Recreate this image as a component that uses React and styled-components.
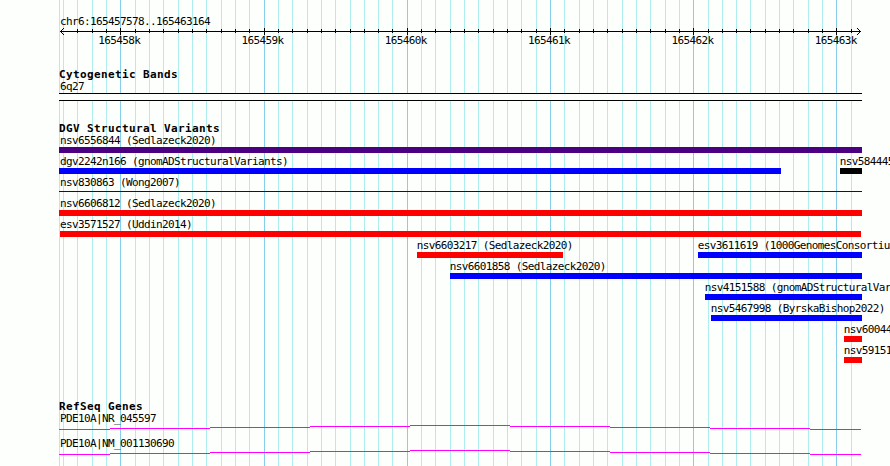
import React from 'react';
import styled, { createGlobalStyle } from 'styled-components';

const GlobalStyle = createGlobalStyle`
  body { margin: 0; background: #fdfffc; }
`;

const LEFT = 59;
const RIGHT = 862;

const Browser = styled.main`
  position: relative;
  width: 890px;
  height: 466px;
  overflow: hidden;
  background: #fdfffc;
  color: #000;
  font-family: 'DejaVu Sans Mono', 'Liberation Mono', monospace;
`;

const GridLines = styled.svg`
  position: absolute;
  inset: 0;
  display: block;
`;

const Content = styled.div`
  position: relative;
  display: flex;
  flex-direction: column;
`;

const Label = styled.span`
  display: block;
  height: 12px;
  font-size: 11px;
  line-height: 12px;
  letter-spacing: -0.622px;
  white-space: pre;
`;

const Ruler = styled.header`
  height: 68px;
  padding-top: 16px;
  box-sizing: border-box;
`;

const Region = styled(Label)`
  margin-left: 60px;
`;

const Axis = styled.svg`
  display: block;
  height: 7px;
`;

const TickRow = styled.div`
  display: flex;
  gap: 101.3px;
  padding-left: 98.2px;
`;

const TickLabel = styled(Label)`
  width: 42px;
  flex: none;
`;

const Track = styled.section`
  height: ${(p) => p.$height}px;
`;

const Title = styled.h2`
  margin: 0 0 0 59px;
  height: 13px;
  font-size: 11px;
  line-height: 13px;
  font-weight: 700;
  letter-spacing: 0.378px;
  white-space: pre;
`;

const Band = styled.div`
  margin: 0 0 0 ${LEFT}px;
  width: ${RIGHT - LEFT}px;
  height: 8px;
  box-sizing: border-box;
  border: solid #000;
  border-width: 1px 0;
  background: #fdfffc;
`;

const Row = styled.div`
  display: grid;
  height: 21px;
`;

const Feature = styled.div`
  grid-area: 1 / 1;
  margin-left: ${(p) => p.$start}px;
`;

const FeatureLabel = styled(Label)`
  margin-left: ${(p) => (p.$edge ? 60 : -0.3)}px;
`;

const Bar = styled.div`
  width: ${(p) => p.$width}px;
  height: ${(p) => (p.$thin ? 1 : 6)}px;
  margin-top: ${(p) => (p.$thin ? 2 : 0)}px;
  margin-left: ${(p) => p.$offset}px;
  background: ${(p) => p.$color};
`;

const Gene = styled.div`
  height: 25px;
`;

const Intron = styled.svg`
  display: block;
  height: 5px;
`;

const lines = Array.from({ length: 56 }, (_, i) => ({
  x: Math.round(63.12 + i * 14.32),
  major: i % 10 === 4,
}));

const ticks = ['165458k', '165459k', '165460k', '165461k', '165462k', '165463k'];

const rows = [
  [{ name: 'nsv6556844 (Sedlazeck2020)', from: 59, to: 862, color: '#4b0082' }],
  [
    { name: 'dgv2242n166 (gnomADStructuralVariants)', from: 59, to: 781, color: '#0000ff' },
    { name: 'nsv584445', from: 840, to: 862, color: '#000' },
  ],
  [{ name: 'nsv830863 (Wong2007)', from: 59, to: 862, color: '#0000cd', thin: true }],
  [{ name: 'nsv6606812 (Sedlazeck2020)', from: 59, to: 862, color: '#ff0000' }],
  [{ name: 'esv3571527 (Uddin2014)', from: 60, to: 861, color: '#ff0000' }],
  [
    { name: 'nsv6603217 (Sedlazeck2020)', from: 417, to: 563, color: '#ff0000' },
    { name: 'esv3611619 (1000GenomesConsortium)', from: 698, to: 862, color: '#0000ff' },
  ],
  [{ name: 'nsv6601858 (Sedlazeck2020)', from: 450, to: 862, color: '#0000ff' }],
  [{ name: 'nsv4151588 (gnomADStructuralVariants)', from: 705, to: 862, color: '#0000ff' }],
  [{ name: 'nsv5467998 (ByrskaBishop2022)', from: 711, to: 862, color: '#0000ff' }],
  [{ name: 'nsv60044', from: 844, to: 862, color: '#ff0000' }],
  [{ name: 'nsv59151', from: 844, to: 862, color: '#ff0000' }],
];

const intronPath =
  'M59 4.5H110M110 3.5H210M210 2.5H310M310 1.5H410M410 0.5H510M510 1.5H610M610 2.5H710M710 3.5H810M810 4.5H861';

function FeatureGlyph({ feature }) {
  const edge = feature.from <= 60;
  return (
    <Feature $start={edge ? 0 : feature.from}>
      <FeatureLabel $edge={edge}>{feature.name}</FeatureLabel>
      <Bar
        $offset={edge ? feature.from : 0}
        $width={feature.to - feature.from}
        $color={feature.color}
        $thin={feature.thin}
      />
    </Feature>
  );
}

export default function App() {
  return (
    <>
      <GlobalStyle />
      <Browser>
        <GridLines width="890" height="466" shapeRendering="crispEdges">
          <rect x="59" y="0" width="1" height="466" fill="#afeeee" />
          {lines.map((l) => (
            <rect key={l.x} x={l.x} y="0" width="1" height="466" fill={l.major ? '#87ceeb' : '#afeeee'} />
          ))}
        </GridLines>
        <Content>
          <Ruler>
            <Region>chr6:165457578..165463164</Region>
            <Axis width="890" height="7" viewBox="0 28 890 7" shapeRendering="crispEdges">
              <rect x="60" y="31" width="801" height="1" />
              {lines.slice(1).map((l) => (
                <rect key={l.x} x={l.x} y={l.major ? 28 : 29} width="1" height={l.major ? 7 : 4} />
              ))}
              <path d="M61 30h1v1h-1zM62 29h1v1h-1zM63 28h1v1h-1zM61 32h1v1h-1zM62 33h1v1h-1zM63 34h1v1h-1z" />
              <path d="M859 30h1v1h-1zM858 29h1v1h-1zM857 28h1v1h-1zM859 32h1v1h-1zM858 33h1v1h-1zM857 34h1v1h-1z" />
            </Axis>
            <TickRow>
              {ticks.map((t) => (
                <TickLabel key={t}>{t}</TickLabel>
              ))}
            </TickRow>
          </Ruler>
          <Track $height={54}>
            <Title>Cytogenetic Bands</Title>
            <Region>6q27</Region>
            <Band />
          </Track>
          <Track $height={278}>
            <Title>DGV Structural Variants</Title>
            {rows.map((row) => (
              <Row key={row[0].name}>
                {row.map((f) => (
                  <FeatureGlyph key={f.name} feature={f} />
                ))}
              </Row>
            ))}
          </Track>
          <Track $height={66}>
            <Title>RefSeq Genes</Title>
            {['PDE10A|NR_045597', 'PDE10A|NM_001130690'].map((g) => (
              <Gene key={g}>
                <Region>{g}</Region>
                <Intron width="890" height="5" shapeRendering="crispEdges">
                  <path d={intronPath} stroke="#ff00ff" />
                </Intron>
              </Gene>
            ))}
          </Track>
        </Content>
      </Browser>
    </>
  );
}
